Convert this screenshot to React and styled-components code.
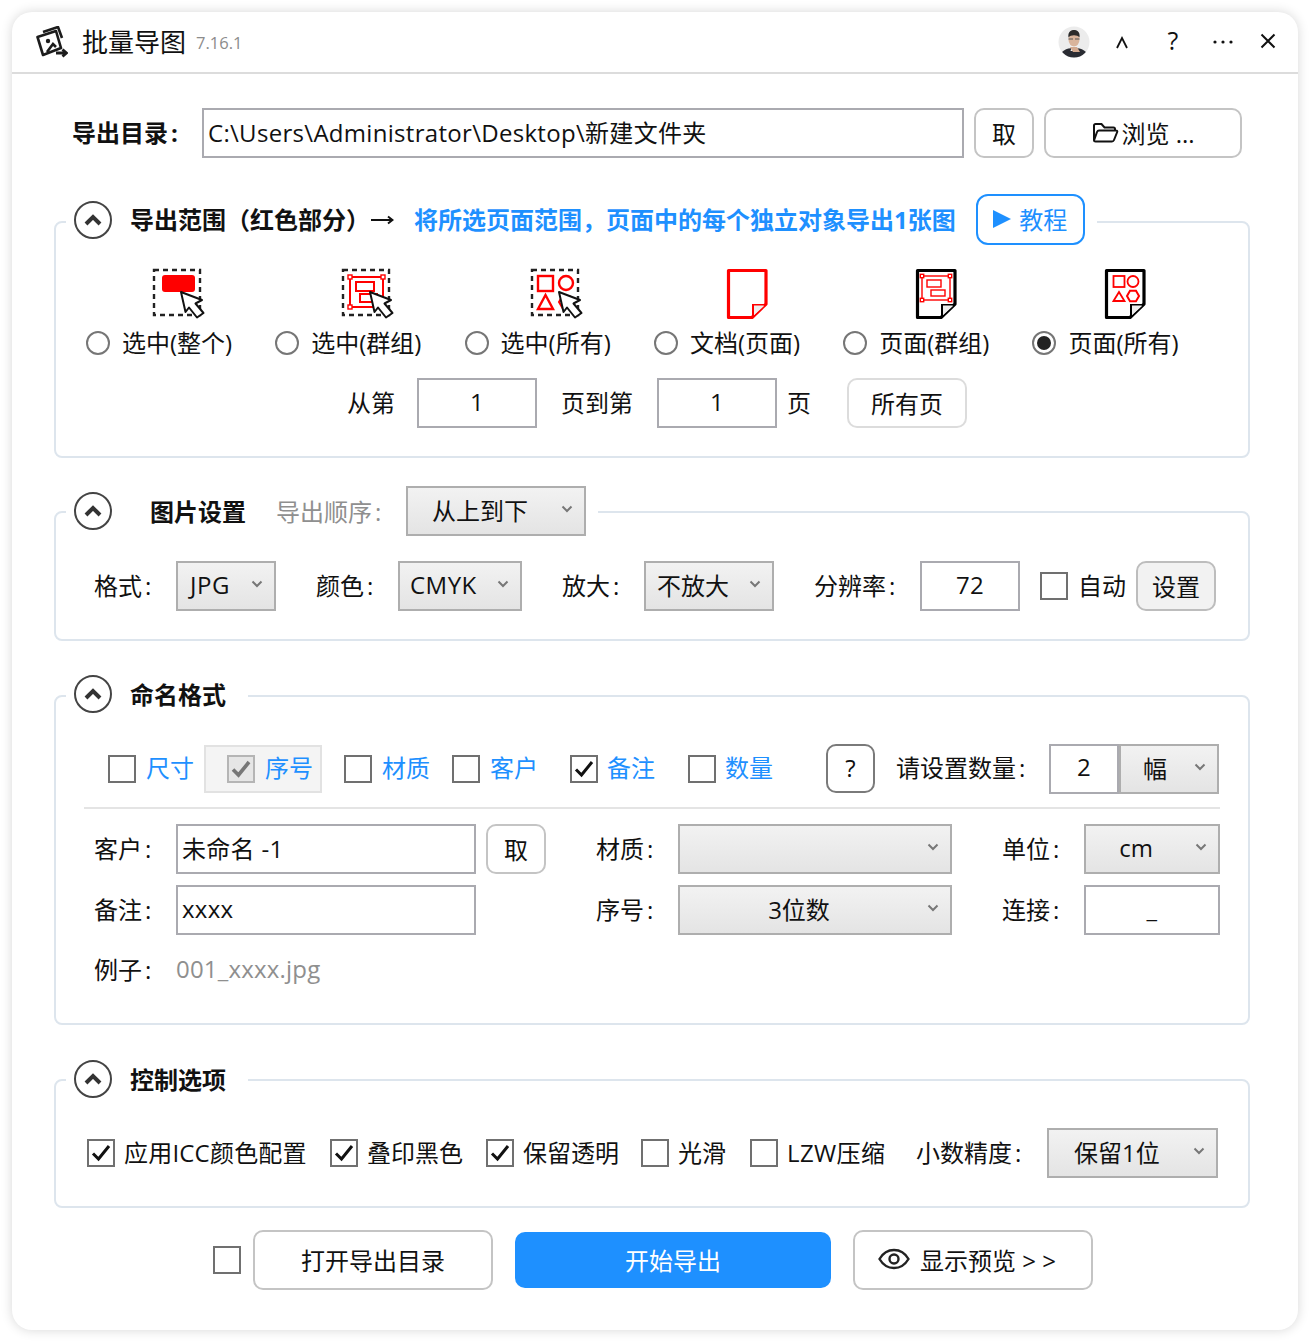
import React from 'react';
import styled, { createGlobalStyle } from 'styled-components';

const FONT = `"Open Sans", "Noto Sans CJK SC", sans-serif`;
const BLUE = '#1e90ff';

const Global = createGlobalStyle`
  html, body { margin: 0; padding: 0; background: #fff; }
  body { font-family: ${FONT}; font-size: 24px; color: #111; }
  * { box-sizing: border-box; }
`;

const Page = styled.div`
  width: 1310px;
  height: 1342px;
  padding: 12px;
`;
const Win = styled.div`
  width: 1286px;
  height: 1318px;
  background: #fff;
  border-radius: 20px;
  box-shadow: 0 0 12px rgba(0,0,0,.16);
`;
const TitleBar = styled.header`
  height: 62px;
  border-bottom: 2px solid #dcdcdc;
  display: flex;
  align-items: center;
  padding: 0 20px 0 24px;
`;
const AppName = styled.span`
  font-size: 26px;
  line-height: 36px;
  margin-left: 14px;
`;
const Version = styled.span`
  font-size: 16.5px;
  color: #8c8c8c;
  margin-left: 10px;
`;
const Spacer = styled.div`flex: 1;`;
const WinBtn = styled.span`
  width: ${p => p.$w || 50}px;
  display: flex;
  justify-content: center;
  align-items: center;
  font-size: 25px;
  line-height: 30px;
  padding-bottom: ${p => p.$pb || 0}px;
  padding-right: ${p => p.$pr || 0}px;
`;
const Main = styled.main`
  padding: 34px 48px 0 42px;
`;
const DirRow = styled.div`
  display: flex;
  align-items: center;
  height: 50px;
  padding-left: 18px;
`;
const BoldLabel = styled.span`
  font-weight: 700;
  width: 130px;
  white-space: nowrap;
  padding-bottom: 4px;
`;
const Colon = styled.span`
  margin-left: 3px;
`;
const TextInput = styled.input`
  width: ${p => p.$w}px;
  height: 50px;
  border: 2px solid #aaaab0;
  background: #fff;
  font: 24px ${FONT};
  letter-spacing: 0.3px;
  color: #111;
  padding: 0 4px 4px;
  text-align: ${p => p.$center ? 'center' : 'left'};
  margin-left: ${p => p.$ml || 0}px;
  outline: none;
  border-radius: 0;
  flex: none;
`;
const Btn = styled.button`
  width: ${p => p.$w}px;
  height: ${p => p.$h || 50}px;
  margin-left: ${p => p.$ml || 0}px;
  border: 2px solid ${p => p.$border || '#c4c4c4'};
  border-radius: 10px;
  background: ${p => p.$bg || '#fff'};
  font: 24px ${FONT};
  color: #111;
  padding: 0 ${p => p.$pr || 0}px 2px 0;
  display: flex;
  align-items: center;
  justify-content: center;
  gap: ${p => p.$gap || 0}px;
  flex: none;
`;
const Section = styled.fieldset`
  margin: ${p => p.$mt}px 0 0;
  padding: 0;
  border: 2px solid #dde5ed;
  border-radius: 8px;
  min-width: 0;
`;
const Legend = styled.legend`
  margin-left: 10px;
  padding: 0 ${p => p.$pr || 22}px ${p => p.$pb}px 8px;
  height: ${p => p.$h}px;
  display: flex;
  align-items: center;
`;
const Collapse = styled.span`
  width: 38px;
  height: 38px;
  border: 2px solid #444;
  border-radius: 50%;
  display: flex;
  align-items: center;
  justify-content: center;
  flex: none;
`;
const LegendTitle = styled.span`
  font-weight: 700;
  margin-left: ${p => p.$ml || 18}px;
  white-space: nowrap;
  padding-bottom: 2px;
`;
const Arrow = styled.span`
  width: 24px;
  display: flex;
`;
const Hint = styled.span`
  margin-left: 20px;
  color: ${BLUE};
  font-weight: 700;
  white-space: nowrap;
  padding-bottom: 2px;
`;
const TutorialBtn = styled.button`
  margin-left: 20px;
  width: 109px;
  height: 51px;
  border: 2px solid ${BLUE};
  border-radius: 12px;
  background: #fff;
  color: ${BLUE};
  font: 24px ${FONT};
  display: flex;
  align-items: center;
  justify-content: center;
  gap: 8px;
  padding: 0 0 2px;
`;
const Muted = styled.span`
  color: #8f8f8f;
  margin-left: ${p => p.$ml || 0}px;
  width: ${p => p.$w ? p.$w + 'px' : 'auto'};
  white-space: nowrap;
  padding-bottom: ${p => p.$pb || 4}px;
  letter-spacing: ${p => p.$ls || 0}px;
`;
const ModesBody = styled.div`
  padding: 18px 30px 28px;
`;
const Modes = styled.div`
  display: grid;
  grid-template-columns: repeat(6, 189.3px);
`;
const Mode = styled.div`
  display: flex;
  flex-direction: column;
`;
const ModeIcon = styled.svg`
  width: 60px;
  height: 52px;
  margin-left: 62px;
  display: block;
`;
const ModeRow = styled.label`
  display: flex;
  align-items: center;
  height: 46px;
  white-space: nowrap;
`;
const ModeText = styled.span`
  padding-bottom: 4px;
`;
const Radio = styled.span`
  width: 24px;
  height: 24px;
  border: 2px solid #767676;
  border-radius: 50%;
  margin-right: 12px;
  display: flex;
  align-items: center;
  justify-content: center;
  flex: none;
  &::after {
    content: '';
    display: ${p => p.$on ? 'block' : 'none'};
    width: 14px;
    height: 14px;
    border-radius: 50%;
    background: #222;
  }
`;
const RangeRow = styled.div`
  display: flex;
  align-items: center;
  height: 50px;
  margin-top: 12px;
  padding-left: 261px;
`;
const Lab = styled.span`
  width: ${p => p.$w ? p.$w + 'px' : 'auto'};
  margin-left: ${p => p.$ml || 0}px;
  white-space: nowrap;
  flex: none;
  padding-bottom: 4px;
`;
const SelectBox = styled.div`
  width: ${p => p.$w}px;
  height: 50px;
  margin-left: ${p => p.$ml || 0}px;
  border: 2px solid #aeaeae;
  background: linear-gradient(#f2f2f2, #e4e4e4);
  position: relative;
  display: flex;
  align-items: center;
  padding-left: ${p => p.$pl || 0}px;
  padding-right: ${p => p.$pr || 0}px;
  padding-bottom: 3px;
  justify-content: ${p => p.$center ? 'center' : 'flex-start'};
  white-space: nowrap;
  letter-spacing: ${p => p.$ls || 0}px;
  flex: none;
`;
const Caret = styled.svg`
  position: absolute;
  right: 11px;
  top: 16px;
  width: 12px;
  height: 10px;
`;
const FieldRow = styled.div`
  display: flex;
  align-items: center;
  height: 50px;
  margin-top: ${p => p.$mt || 0}px;
  padding-left: ${p => p.$pl || 0}px;
`;
const RowBody = styled.div`
  padding: ${p => p.$pt}px 28px ${p => p.$pb}px ${p => p.$pl}px;
`;
const Box = styled.span`
  width: 28px;
  height: 28px;
  border: 2px solid #707070;
  background: #fff;
  display: flex;
  align-items: center;
  justify-content: center;
  flex: none;
  margin-left: ${p => p.$ml || 0}px;
`;
const DimBox = styled(Box)`
  background: #e6e6e6;
  border-color: #b5b5b5;
`;
const CheckText = styled.span`
  margin-left: ${p => p.$gap || 10}px;
  width: ${p => p.$w}px;
  white-space: nowrap;
  color: ${p => p.$blue ? BLUE : '#111'};
  flex: none;
  padding-bottom: 4px;
  letter-spacing: ${p => p.$ls || 0}px;
`;
const CheckRow = styled.div`
  display: flex;
  align-items: center;
  height: 49px;
  padding-left: 24px;
`;
const Highlight = styled.div`
  width: 118px;
  height: 48px;
  margin-left: 10px;
  padding-left: 21px;
  background: #f4f4f4;
  border: 2px solid #e2e2e2;
  display: flex;
  align-items: center;
  flex: none;
`;
const Divider = styled.hr`
  border: 0;
  height: 2px;
  background: #e4e4e4;
  margin: 14px 0 15px;
`;
const ExampleRow = styled.div`
  display: flex;
  align-items: center;
  height: 50px;
  margin-top: 10px;
  padding-left: 10px;
  margin-bottom: 28px;
`;
const Actions = styled.div`
  display: flex;
  align-items: center;
  margin-top: 22px;
  padding-left: 159px;
`;
const BigBtn = styled(Btn)`
  height: 60px;
  width: 240px;
`;
const StartBtn = styled.button`
  width: 316px;
  height: 56px;
  margin-left: 22px;
  background: ${BLUE};
  color: #fff;
  border: 0;
  border-radius: 10px;
  font: 24px ${FONT};
  padding: 0 0 2px;
`;

const Tick = ({ c = '#111', w = 3 }) => (
  <svg width="22" height="20" viewBox="0 0 22 20"><path d="M3 10.500 8.500 16 19 3" fill="none" stroke={c} strokeWidth={w} /></svg>
);
const Check = ({ on, ml }) => <Box $ml={ml}>{on && <Tick />}</Box>;
const Chevron = () => (
  <Caret viewBox="0 0 12 10"><path d="M1.500 2.500 6 7l4.500-4.500" fill="none" stroke="#777" strokeWidth="2" /></Caret>
);
const Up = () => (
  <svg width="20" height="14" viewBox="0 0 20 14"><path d="M3 11 10 4l7 7" fill="none" stroke="#333" strokeWidth="4" /></svg>
);

const Cursor = ({ x, y }) => (
  <path transform={`translate(${x} ${y})`} d="M0 0 4.500 20 8 15.500 16 25.500 22.500 21 14.500 11.500 21 8Z" fill="#fff" stroke="#111" strokeWidth="2" strokeLinejoin="round" />
);
const Dashed = ({ x = 6 }) => (
  <rect x={x} y="2" width="46" height="45" fill="none" stroke="#222" strokeWidth="2.400" strokeDasharray="5 4" />
);
const Frame = ({ x, y, w, h, s = 2, hs = 4 }) => (
  <g fill="#fff" stroke="#f00" strokeWidth={s}>
    <rect x={x} y={y} width={w} height={h} fill="none" />
    {[[x, y], [x + w, y], [x, y + h], [x + w, y + h]].map(([a, b], i) => (
      <rect key={i} x={a - hs / 2} y={b - hs / 2} width={hs} height={hs} strokeWidth="1.400" />
    ))}
  </g>
);
const Hex = ({ cx, cy, r }) => (
  <polygon points={[0, 1, 2, 3, 4, 5].map(i => `${(cx + r * Math.cos(i * Math.PI / 3)).toFixed(1)},${(cy + r * Math.sin(i * Math.PI / 3)).toFixed(1)}`).join(' ')} fill="none" stroke="#f00" strokeWidth="2" />
);
const PageShape = ({ c, inner }) => (
  <g>
    <path d="M12.500 2.500H50V36L36 49.500H12.500Z" fill="#fff" stroke={c} strokeWidth="3.200" strokeLinejoin="round" />
    <path d="M37 48V37H49" fill="#eee" stroke={c} strokeWidth="2" />
    <path d="M38 47 48 37.500H38Z" fill="#eee" />
    {inner}
  </g>
);

const icons = [
  <g key="a">
    <Dashed />
    <rect x="14" y="7" width="33" height="17" rx="3" fill="#f00" />
    <Cursor x={33} y={24} />
  </g>,
  <g key="b">
    <Dashed />
    <Frame x={13} y={9} w={33} h={30} />
    <rect x="19" y="14" width="18" height="9" fill="none" stroke="#f00" strokeWidth="2" />
    <rect x="23" y="26" width="17" height="8" fill="none" stroke="#f00" strokeWidth="2" />
    <Cursor x={33} y={24} />
  </g>,
  <g key="c">
    <Dashed x={5} />
    <rect x="11" y="8" width="15" height="15" fill="none" stroke="#f00" strokeWidth="2.400" />
    <circle cx="39" cy="15" r="7" fill="none" stroke="#f00" strokeWidth="2.400" />
    <path d="M11 41 18.500 27 26 41Z" fill="none" stroke="#f00" strokeWidth="2.400" />
    <Hex cx={39} cy={34} r={7} />
    <Cursor x={32} y={24} />
  </g>,
  <PageShape key="d" c="#f00" />,
  <PageShape key="e" c="#000" inner={
    <g>
      <Frame x={17} y={8} w={28} h={24} s={1.400} hs={3.400} />
      <rect x="22" y="12" width="14" height="7" fill="none" stroke="#f00" strokeWidth="1.400" />
      <rect x="26" y="22" width="14" height="6" fill="none" stroke="#f00" strokeWidth="1.400" />
    </g>
  } />,
  <PageShape key="f" c="#000" inner={
    <g>
      <rect x="19.500" y="8" width="11" height="11" fill="none" stroke="#f00" strokeWidth="1.800" />
      <circle cx="39" cy="13.500" r="5.500" fill="none" stroke="#f00" strokeWidth="1.800" />
      <path d="M19.500 33 25 24 30.500 33Z" fill="none" stroke="#f00" strokeWidth="1.800" />
      <Hex cx={39} cy={28} r={6} />
    </g>
  } />,
];
const modeNames = ['选中(整个)', '选中(群组)', '选中(所有)', '文档(页面)', '页面(群组)', '页面(所有)'];
const RANGE_TITLE = '导出范围\uFF08红色部分\uFF09';
const HINT = '将所选页面范围\uFF0C页面中的每个独立对象导出1张图';

export default function App() {
  return (
    <Page>
      <Global />
      <Win>
        <TitleBar>
          <svg width="32" height="32" viewBox="0 0 32 32">
            <g fill="none" stroke="#1c1c1c" strokeWidth="2.600" strokeLinejoin="round">
              <path d="M1.500 11 20 5l5 17-18 7Z" fill="#fff" />
              <path d="M7 6 22 1l4 11" />
            </g>
            <circle cx="12" cy="15" r="2.200" fill="#1c1c1c" />
            <path d="M11 26l6-8 3 3" fill="none" stroke="#1c1c1c" strokeWidth="2.600" />
            <path d="M20 27h10M26.500 23.500 30.500 27l-4 3.500" fill="#fff" stroke="#1c1c1c" strokeWidth="2.800" />
          </svg>
          <AppName>批量导图</AppName>
          <Version>7.16.1</Version>
          <Spacer />
          <svg width="32" height="32" viewBox="0 0 32 32">
            <defs><clipPath id="av"><circle cx="16" cy="16" r="15.500" /></clipPath></defs>
            <g clipPath="url(#av)">
              <rect width="32" height="32" fill="#ececec" />
              <path d="M2 32c0-7 6-10 14-10s14 3 14 10Z" fill="#2a2c33" />
              <path d="M14 20h4l1.500 5h-7Z" fill="#f4f4f4" />
              <ellipse cx="16" cy="13.500" rx="5.500" ry="7" fill="#d9b49b" />
              <path d="M10.500 11.500c-1-6 3-7.500 5.500-7.500s6.500 1.500 5.500 7.500c-2-3-9-3-11 0Z" fill="#2b2b2b" />
              <path d="M10.500 13h4.500M17 13h4.500" stroke="#555" strokeWidth="1.200" />
              <path d="M12 21h7l3 5h-7Z" fill="#d2a98f" />
            </g>
          </svg>
          <WinBtn $w={68} $pr={4}><svg width="14" height="14" viewBox="0 0 14 14"><path d="M2 13 7 3l5 10" fill="none" stroke="#111" strokeWidth="1.800" /></svg></WinBtn>
          <WinBtn $w={30} $pb={4}>?</WinBtn>
          <WinBtn $w={70}><svg width="20" height="4" viewBox="0 0 20 4"><g fill="#111"><circle cx="2" cy="2" r="1.600" /><circle cx="10" cy="2" r="1.600" /><circle cx="18" cy="2" r="1.600" /></g></svg></WinBtn>
          <WinBtn $w={20} $pb={2}><svg width="16" height="16" viewBox="0 0 16 16"><path d="M1.500 1.500l13 13M14.500 1.500l-13 13" stroke="#111" strokeWidth="2" /></svg></WinBtn>
        </TitleBar>
        <Main>
          <DirRow>
            <BoldLabel>导出目录<Colon>:</Colon></BoldLabel>
            <TextInput $w={762} readOnly value="C:\Users\Administrator\Desktop\新建文件夹" />
            <Btn $w={60} $ml={10}>取</Btn>
            <Btn $w={198} $ml={10} $gap={2}>
              <svg width="28" height="24" viewBox="0 0 28 24"><path d="M3 20V5.500A1.500 1.500 0 0 1 4.500 4h6l3 3.500h9a1.500 1.500 0 0 1 1.500 1.500v1M3 20.500c0 .8.7 1 1.500 1H21c1 0 1.600-.5 2-1.500l3.200-8c.4-1-.2-1.500-1.200-1.500H8c-1 0-1.600.5-2 1.500Z" fill="none" stroke="#111" strokeWidth="2" /></svg>
              浏览 ...
            </Btn>
          </DirRow>

          <Section $mt={36}>
            <Legend $h={56} $pb={5} $pr={12}>
              <Collapse><Up /></Collapse>
              <LegendTitle>{RANGE_TITLE}</LegendTitle>
              <Arrow><svg width="24" height="12" viewBox="0 0 24 12"><path d="M1 6h21M18 2.500 22.500 6 18 9.500" fill="none" stroke="#111" strokeWidth="2" /></svg></Arrow>
              <Hint>{HINT}</Hint>
              <TutorialBtn>
                <svg width="18" height="20" viewBox="0 0 18 20"><path d="M0 1 18 10 0 19Z" fill={BLUE} /></svg>
                教程
              </TutorialBtn>
            </Legend>
            <ModesBody>
              <Modes>
                {modeNames.map((n, i) => (
                  <Mode key={n}>
                    <ModeIcon viewBox="0 0 60 52">{icons[i]}</ModeIcon>
                    <ModeRow><Radio $on={i === 5} /><ModeText>{n}</ModeText></ModeRow>
                  </Mode>
                ))}
              </Modes>
              <RangeRow>
                <Lab>从第</Lab>
                <TextInput $w={120} $ml={22} $center readOnly value="1" />
                <Lab $ml={24}>页到第</Lab>
                <TextInput $w={120} $ml={24} $center readOnly value="1" />
                <Lab $ml={10}>页</Lab>
                <Btn $w={120} $ml={36} $border="#dcdcdc">所有页</Btn>
              </RangeRow>
            </ModesBody>
          </Section>

          <Section $mt={28}>
            <Legend $h={52} $pb={2} $pr={12}>
              <Collapse><Up /></Collapse>
              <LegendTitle $ml={38}>图片设置</LegendTitle>
              <Muted $ml={30} $w={130} $pb={2}>导出顺序<Colon>:</Colon></Muted>
              <SelectBox $w={180} $pl={24}>从上到下<Chevron /></SelectBox>
            </Legend>
            <RowBody $pt={23} $pb={28} $pl={38}>
              <FieldRow>
                <Lab $w={82}>格式<Colon>:</Colon></Lab>
                <SelectBox $w={100} $pl={12} $ls={0.5}>JPG<Chevron /></SelectBox>
                <Lab $w={82} $ml={40}>颜色<Colon>:</Colon></Lab>
                <SelectBox $w={124} $pl={10} $ls={0.5}>CMYK<Chevron /></SelectBox>
                <Lab $w={82} $ml={40}>放大<Colon>:</Colon></Lab>
                <SelectBox $w={130} $pl={11}>不放大<Chevron /></SelectBox>
                <Lab $w={106} $ml={40}>分辨率<Colon>:</Colon></Lab>
                <TextInput $w={100} $center readOnly value="72" />
                <Check ml={20} />
                <CheckText $w={48}>自动</CheckText>
                <Btn $w={80} $ml={10} $bg="#f2f2f2" $border="#bdbdbd">设置</Btn>
              </FieldRow>
            </RowBody>
          </Section>

          <Section $mt={34}>
            <Legend $h={42} $pb={4}>
              <Collapse><Up /></Collapse>
              <LegendTitle>命名格式</LegendTitle>
            </Legend>
            <RowBody $pt={27} $pb={0} $pl={28}>
              <CheckRow>
                <Check />
                <CheckText $w={48} $blue>尺寸</CheckText>
                <Highlight>
                  <DimBox><Tick c="#777" w={3.600} /></DimBox>
                  <CheckText $w={48} $blue>序号</CheckText>
                </Highlight>
                <Check ml={22} />
                <CheckText $w={48} $blue>材质</CheckText>
                <Check ml={22} />
                <CheckText $w={48} $blue>客户</CheckText>
                <Check ml={32} on />
                <CheckText $w={48} $gap={9} $blue>备注</CheckText>
                <Check ml={33} />
                <CheckText $w={48} $gap={9} $blue>数量</CheckText>
                <Btn $w={49} $h={49} $ml={53} $border="#7a7a7a">?</Btn>
                <Lab $w={130} $ml={21}>请设置数量<Colon>:</Colon></Lab>
                <TextInput $w={70} $ml={23} $center readOnly value="2" />
                <SelectBox $w={100} $pl={22}>幅<Chevron /></SelectBox>
              </CheckRow>
              <Divider />
              <FieldRow $pl={10}>
                <Lab $w={82}>客户<Colon>:</Colon></Lab>
                <TextInput $w={300} readOnly value="未命名 -1" />
                <Btn $w={60} $ml={10}>取</Btn>
                <Lab $w={82} $ml={50}>材质<Colon>:</Colon></Lab>
                <SelectBox $w={274}><Chevron /></SelectBox>
                <Lab $w={82} $ml={50}>单位<Colon>:</Colon></Lab>
                <SelectBox $w={136} $center $pr={32}>cm<Chevron /></SelectBox>
              </FieldRow>
              <FieldRow $pl={10} $mt={11}>
                <Lab $w={82}>备注<Colon>:</Colon></Lab>
                <TextInput $w={300} readOnly value="xxxx" />
                <Lab $w={82} $ml={120}>序号<Colon>:</Colon></Lab>
                <SelectBox $w={274} $center $pr={32}>3位数<Chevron /></SelectBox>
                <Lab $w={82} $ml={50}>连接<Colon>:</Colon></Lab>
                <TextInput $w={136} $center readOnly value="_" />
              </FieldRow>
              <ExampleRow>
                <Lab $w={82}>例子<Colon>:</Colon></Lab>
                <Muted $ls={0.2}>001_xxxx.jpg</Muted>
              </ExampleRow>
            </RowBody>
          </Section>

          <Section $mt={35}>
            <Legend $h={40} $pb={2}>
              <Collapse><Up /></Collapse>
              <LegendTitle>控制选项</LegendTitle>
            </Legend>
            <RowBody $pt={28} $pb={28} $pl={31}>
              <FieldRow>
                <Check on />
                <CheckText $w={183} $gap={9} $ls={0.2}>应用ICC颜色配置</CheckText>
                <Check ml={23} on />
                <CheckText $w={96} $gap={9}>叠印黑色</CheckText>
                <Check ml={23} on />
                <CheckText $w={96} $gap={9}>保留透明</CheckText>
                <Check ml={22} />
                <CheckText $w={48} $gap={9}>光滑</CheckText>
                <Check ml={24} />
                <CheckText $w={99} $gap={9} $ls={0.4}>LZW压缩</CheckText>
                <Lab $w={106} $ml={30}>小数精度<Colon>:</Colon></Lab>
                <SelectBox $w={171} $ml={25} $pl={25}>保留1位<Chevron /></SelectBox>
              </FieldRow>
            </RowBody>
          </Section>

          <Actions>
            <Check />
            <BigBtn $ml={12}>打开导出目录</BigBtn>
            <StartBtn>开始导出</StartBtn>
            <BigBtn $ml={22} $gap={10} $pr={12}>
              <svg width="32" height="22" viewBox="0 0 32 22"><path d="M1.500 11C5 5 10 2 16 2s11 3 14.500 9C27 17 22 20 16 20S5 17 1.500 11Z" fill="none" stroke="#222" strokeWidth="2.400" /><circle cx="16" cy="11" r="4.500" fill="none" stroke="#222" strokeWidth="2.400" /></svg>
              显示预览 &gt; &gt;
            </BigBtn>
          </Actions>
        </Main>
      </Win>
    </Page>
  );
}
